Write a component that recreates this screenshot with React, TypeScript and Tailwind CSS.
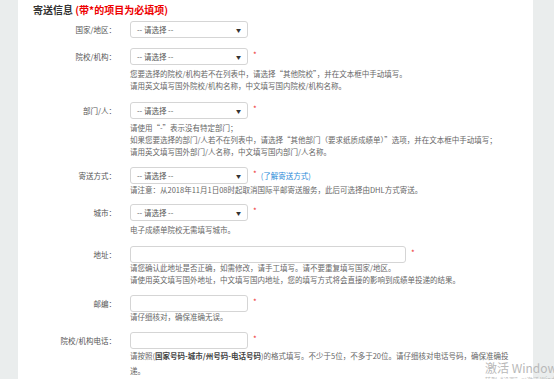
import { ReactNode } from "react";

const font = {
  fontFamily: '"Noto Sans CJK SC", "Liberation Sans", sans-serif',
};

function Select() {
  return (
    <div className="w-[118px] h-[17px] border border-[#d5d5d5] rounded-[3px] bg-white flex items-center justify-between pl-[6px] pr-[6px] text-[7.5px] text-[#555]">
      <span>-- 请选择 --</span>
      <span className="text-[5px] text-[#333]">▼</span>
    </div>
  );
}

function Input({ wide }: { wide?: boolean }) {
  return (
    <div
      className={`${wide ? "w-[276px]" : "w-[118px]"} h-[17px] border border-[#d5d5d5] rounded-[3px] bg-white`}
    />
  );
}

function Star() {
  return <span className="text-[#e33] text-[8px] ml-[5px] -mt-[4px]">*</span>;
}

function Row({
  label,
  field,
  help,
  mt,
}: {
  label: string;
  field: ReactNode;
  help?: ReactNode;
  mt: string;
}) {
  return (
    <div className={`flex ${mt}`}>
      <div className="w-[98px] h-[17px] flex items-center justify-end text-[7.5px] text-[#555] shrink-0">
        {label}
      </div>
      <div className="ml-[14px]">
        <div className="flex items-center h-[17px]">{field}</div>
        {help && (
          <div className="mt-[3px] text-[7.5px] leading-[12px] text-[#666] whitespace-nowrap">
            {help}
          </div>
        )}
      </div>
    </div>
  );
}

export default function App() {
  return (
    <div
      className="w-[554px] h-[379px] overflow-hidden flex bg-[#eaeded] relative"
      style={font}
    >
      <div className="w-[18px] shrink-0" />
      <div className="w-[515px] bg-white h-full">
        <h2 className="pl-[15px] pt-[3px] text-[10px] leading-[14px] font-bold text-[#333]">
          寄送信息 <span className="text-[#e00]">(带*的项目为必填项)</span>
        </h2>

        <Row mt="mt-[4px]" label="国家/地区：" field={<Select />} />

        <Row
          mt="mt-[10px]"
          label="院校/机构："
          field={
            <>
              <Select />
              <Star />
            </>
          }
          help={
            <>
              <div>您要选择的院校/机构若不在列表中，请选择“其他院校”，并在文本框中手动填写。</div>
              <div>请用英文填写国外院校/机构名称，中文填写国内院校/机构名称。</div>
            </>
          }
        />

        <Row
          mt="mt-[10px]"
          label="部门/人："
          field={
            <>
              <Select />
              <Star />
            </>
          }
          help={
            <>
              <div>请使用“-”表示没有特定部门；</div>
              <div>如果您要选择的部门/人若不在列表中，请选择“其他部门（要求纸质成绩单）”选项，并在文本框中手动填写；</div>
              <div>请用英文填写国外部门/人名称，中文填写国内部门/人名称。</div>
            </>
          }
        />

        <Row
          mt="mt-[9px]"
          label="寄送方式："
          field={
            <>
              <Select />
              <Star />
              <span className="ml-[4px] text-[7.5px] text-[#2b8ad8]">(了解寄送方式)</span>
            </>
          }
          help={<div className="-mt-[3px]">请注意：从2018年11月1日08时起取消国际平邮寄送服务，此后可选择由DHL方式寄送。</div>}
        />

        <Row
          mt="mt-[8px]"
          label="城市："
          field={
            <>
              <Select />
              <Star />
            </>
          }
          help={<div>电子成绩单院校无需填写城市。</div>}
        />

        <Row
          mt="mt-[10px]"
          label="地址："
          field={
            <>
              <Input wide />
              <Star />
            </>
          }
          help={
            <div className="-mt-[4px]">
              <div>请您确认此地址是否正确，如需修改，请手工填写。请不要重复填写国家/地区。</div>
              <div>请使用英文填写国外地址，中文填写国内地址，您的填写方式将会直接的影响到成绩单投递的结果。</div>
            </div>
          }
        />

        <Row
          mt="mt-[9px]"
          label="邮编："
          field={
            <>
              <Input />
              <Star />
            </>
          }
          help={<div className="-mt-[4px]">请仔细核对，确保准确无误。</div>}
        />

        <Row
          mt="mt-[9px]"
          label="院校/机构电话："
          field={
            <>
              <Input />
              <Star />
            </>
          }
          help={
            <div className="-mt-[4px] leading-[15px]">
              <div>
                请按照(<b className="text-[#444]">国家号码-城市/州号码-电话号码</b>)的格式填写。不少于5位，不多于20位。请仔细核对电话号码，确保准确投
              </div>
              <div>递。</div>
            </div>
          }
        />
      </div>
      <div className="flex-1" />

      <div className="absolute left-[485px] top-[362px] text-[#b9b9b9] leading-none">
        <div className="text-[12px] whitespace-nowrap">激活 Windows</div>
        <div className="text-[6px] mt-[3px] whitespace-nowrap">转到“设置”以激活 Windows。</div>
      </div>
    </div>
  );
}
